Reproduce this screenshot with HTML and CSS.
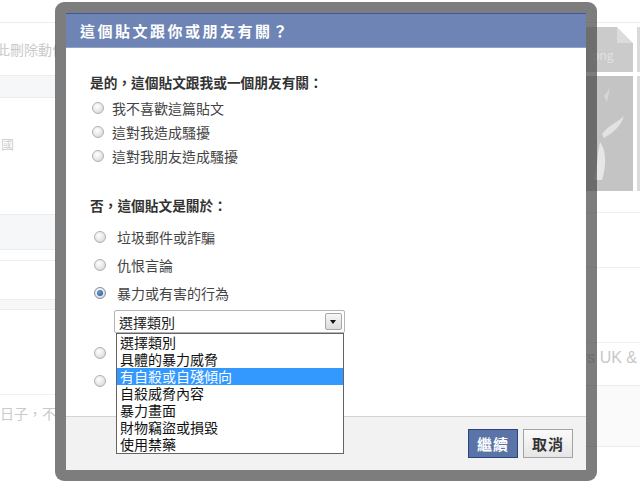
FILE: index.html
```html
<!DOCTYPE html>
<html lang="zh-Hant">
<head>
  <meta charset="UTF-8">
  <title>檢舉貼文</title>
  <link rel="stylesheet" href="styles.css">
</head>
<body>
<!-- 背景頁面（被遮罩淡化） -->
<div class="page">
  <div class="side-left">
    <div class="bg-top"></div>
    <div class="bg-text">此刪除動作</div>
    <div class="bg-band"></div>
    <div class="bg-block"><span class="bg-char">團國</span></div>
    <div class="bg-band tall"></div>
    <div class="bg-line"></div>
    <div class="bg-gap"></div>
    <div class="bg-band thin"></div>
    <div class="bg-fill"></div>
    <div class="bg-text low">日子，不</div>
  </div>
  <div class="middle"></div>
  <div class="side-right">
    <div class="bg-top"></div>
    <div class="tiles">
      <div class="tile small"><span>png</span><i class="fold"></i></div>
      <div class="tile edge"></div>
    </div>
    <div class="tiles">
      <div class="tile big">
        <svg width="49" height="115" viewBox="0 0 49 115">
          <path d="M18 58 C26 48 34 46 40 40 C37 50 30 56 20 62 Z" fill="#e2e2e2"/>
          <path d="M16 66 C22 74 23 88 18 104 L10 104 C14 90 13 78 16 66 Z" fill="#e6e6e6"/>
          <path d="M20 20 L26 12 L23 26 Z" fill="#d6d6d6"/>
        </svg>
      </div>
      <div class="tile edge"></div>
    </div>
    <div class="bg-line r1"></div>
    <div class="bg-line r2"></div>
    <div class="bg-line r3"></div>
    <div class="bg-en">ers UK &amp;</div>
    <div class="bg-band r4"></div>
  </div>
</div>

<!-- 檢舉對話框 -->
<div class="dialog-frame">
  <div class="dialog">
    <div class="dialog-title">這個貼文跟你或朋友有關？</div>
    <div class="dialog-body">
      <div class="section-title">是的，這個貼文跟我或一個朋友有關：</div>
      <div class="options">
        <label class="option"><span class="radio"></span>我不喜歡這篇貼文</label>
        <label class="option"><span class="radio"></span>這對我造成騷擾</label>
        <label class="option"><span class="radio"></span>這對我朋友造成騷擾</label>
      </div>

      <div class="section-title second">否，這個貼文是關於：</div>
      <div class="options wide">
        <label class="option"><span class="radio"></span>垃圾郵件或詐騙</label>
        <label class="option"><span class="radio"></span>仇恨言論</label>
        <label class="option"><span class="radio checked"></span>暴力或有害的行為</label>
      </div>

      <div class="select">
        <span class="select-text">選擇類別</span>
        <span class="select-arrow"></span>
        <ul class="select-list">
          <li>選擇類別</li>
          <li>具體的暴力威脅</li>
          <li class="active">有自殺或自殘傾向</li>
          <li>自殺威脅內容</li>
          <li>暴力畫面</li>
          <li>財物竊盜或損毀</li>
          <li>使用禁藥</li>
        </ul>
      </div>

      <!-- 這兩個選項的文字被展開的下拉選單蓋住 -->
      <div class="options wide after-select">
        <label class="option" aria-label="裸露或色情"><span class="radio"></span></label>
        <label class="option" aria-label="侵犯我的智慧財產權"><span class="radio"></span></label>
      </div>
    </div>
    <div class="dialog-footer">
      <button class="btn btn-primary">繼續</button>
      <button class="btn">取消</button>
    </div>
  </div>
</div>
</body>
</html>
```

FILE: styles.css
```css
html, body {
    margin: 0;
    padding: 0;
}

body {
    width: 640px;
    height: 489px;
    overflow: hidden;
    position: relative;
    background-color: #fff;
    font-family: "Noto Sans CJK TC", "Liberation Sans", sans-serif;
    color: #333;
}

/* ---------- 背景頁面 ---------- */
.page {
    display: flex;
    height: 489px;
}

.side-left {
    width: 56px;
    overflow: hidden;
    display: flex;
    flex-direction: column;
}

.middle {
    flex: 1;
}

.side-right {
    width: 56px;
    overflow: hidden;
    display: flex;
    flex-direction: column;
}

.bg-top {
    height: 22px;
    border-bottom: 1px solid #ececec;
    flex-shrink: 0;
}

.bg-text {
    height: 52px;
    line-height: 52px;
    font-size: 14px;
    color: #cacaca;
    white-space: nowrap;
    margin-left: -4px;
    flex-shrink: 0;
}

.bg-text.low {
    height: 36px;
    line-height: 36px;
    margin-left: 0;
}

.bg-band {
    height: 21px;
    background-color: #f6f7f9;
    border-top: 1px solid #ececec;
    border-bottom: 1px solid #ececec;
    flex-shrink: 0;
}

.bg-band.tall {
    height: 34px;
}

.bg-band.thin {
    height: 9px;
}

.bg-block {
    height: 116px;
    flex-shrink: 0;
}

.bg-char {
    display: block;
    margin-top: 36px;
    margin-left: -12px;
    font-size: 13px;
    color: #d0d0d0;
}

.bg-line {
    height: 10px;
    border-bottom: 1px solid #eeeeee;
    flex-shrink: 0;
}

.bg-gap {
    height: 38px;
    flex-shrink: 0;
}

.bg-fill {
    height: 84px;
    border-bottom: 1px solid #f0f0f0;
    flex-shrink: 0;
}

.tiles {
    display: flex;
    gap: 4px;
    margin-top: 4px;
    flex-shrink: 0;
}

.tiles:first-of-type {
    margin-top: 0;
}

.tile {
    width: 49px;
    background-color: #cbcbcb;
    flex-shrink: 0;
    position: relative;
    overflow: hidden;
}

.tile.small {
    height: 45px;
    font-size: 12px;
    color: #e2e2e2;
}

.tile.small span {
    display: block;
    margin-top: 19px;
    margin-left: 8px;
}

.fold {
    position: absolute;
    top: 0;
    right: 0;
    border-style: solid;
    border-width: 0 16px 16px 0;
    border-color: #fff #fff #dcdcdc #dcdcdc;
}

.tile.big {
    height: 115px;
    background-color: #c4c4c4;
}

.tile.edge {
    width: 10px;
    background-color: #dadada;
}

.bg-line.r1 {
    height: 21px;
}

.bg-line.r2 {
    height: 54px;
}

.bg-line.r3 {
    height: 74px;
}

.bg-en {
    font-family: "Liberation Sans", sans-serif;
    font-size: 16px;
    color: #c8c8c8;
    white-space: nowrap;
    margin-left: -11px;
    margin-top: 6px;
    flex-shrink: 0;
}

.bg-band.r4 {
    margin-top: 18px;
    height: 60px;
    background-color: #fafafa;
}

/* ---------- 對話框 ---------- */
.dialog-frame {
    position: absolute;
    left: 55px;
    top: 2px;
    width: 520px;
    height: 457px;
    padding: 11px;
    border-radius: 9px;
    background-color: rgba(70, 70, 70, 0.7);
}

.dialog {
    height: 100%;
    background-color: #fff;
    display: flex;
    flex-direction: column;
}

.dialog-title {
    height: 35px;
    line-height: 33px;
    box-sizing: border-box;
    background-color: #6d84b4;
    border-top: 1px solid #3b5998;
    border-bottom: 1px solid #8fa2c8;
    color: #fff;
    font-size: 15px;
    font-weight: bold;
    letter-spacing: 2.5px;
    padding-left: 14px;
}

.dialog-body {
    flex: 1;
    padding: 0 24px;
}

.section-title {
    margin-top: 24px;
    line-height: 20px;
    font-size: 13.7px;
    font-weight: bold;
    color: #333;
}

.section-title.second {
    margin-top: 27px;
}

.options {
    margin-top: 4px;
    display: flex;
    flex-direction: column;
}

.option {
    height: 24px;
    display: flex;
    align-items: center;
    gap: 8px;
    padding-left: 2px;
    font-size: 14px;
    color: #444;
}

.options.wide {
    margin-top: 8px;
}

.options.wide .option {
    height: 28px;
    padding-left: 4px;
    gap: 11px;
}

.options.after-select {
    margin-top: 6px;
}

.radio {
    width: 10px;
    height: 10px;
    border-radius: 50%;
    border: 1px solid #b0b0b0;
    background: radial-gradient(circle at 40% 35%, #ffffff 0%, #e6e6e6 55%, #cfcfcf 100%);
    flex-shrink: 0;
    position: relative;
}

.radio.checked {
    border-color: #7c8fa8;
}

.radio.checked::after {
    content: "";
    position: absolute;
    left: 2px;
    top: 2px;
    width: 6px;
    height: 6px;
    border-radius: 50%;
    background: radial-gradient(circle at 40% 35%, #6f9bd3 0%, #1f4f8f 100%);
}

/* 下拉選單 */
.select {
    position: relative;
    margin-top: 3px;
    margin-left: 24px;
    width: 231px;
    height: 23px;
    box-sizing: border-box;
    border: 1px solid #b5b5b5;
    border-radius: 2px;
    display: flex;
    align-items: center;
}

.select-text {
    flex: 1;
    padding-left: 4px;
    font-size: 14px;
    color: #222;
}

.select-arrow {
    width: 17px;
    height: 17px;
    margin-right: 2px;
    box-sizing: border-box;
    border: 1px solid #a7a7a7;
    border-radius: 2px;
    background: linear-gradient(#f7f7f7, #dcdcdc);
    position: relative;
}

.select-arrow::after {
    content: "";
    position: absolute;
    left: 4px;
    top: 6px;
    border-style: solid;
    border-width: 4px 3.5px 0 3.5px;
    border-color: #111 transparent transparent transparent;
}

.select-list {
    position: absolute;
    top: 22px;
    left: 1px;
    width: 228px;
    margin: 0;
    padding: 0;
    list-style: none;
    background-color: #fff;
    border: 1px solid #646464;
    box-sizing: border-box;
}

.select-list li {
    height: 17px;
    line-height: 17px;
    padding-left: 3px;
    font-size: 14px;
    color: #111;
    white-space: nowrap;
}

.select-list li.active {
    background-color: #3399ff;
    color: #fff;
}

/* 底部按鈕 */
.dialog-footer {
    height: 54px;
    box-sizing: border-box;
    border-top: 1px solid #d4d4d4;
    background-color: #f2f2f2;
    display: flex;
    justify-content: flex-end;
    align-items: center;
    gap: 5px;
    padding-right: 13px;
}

.btn {
    height: 29px;
    width: 50px;
    padding: 0;
    font-family: "Noto Sans CJK TC", sans-serif;
    font-size: 15px;
    font-weight: bold;
    color: #333;
    border: 1px solid #a3a3a3;
    background: linear-gradient(#fafafa, #e6e6e6);
    letter-spacing: 1px;
}

.btn-primary {
    color: #fff;
    border-color: #29447e;
    background: #5b74a8;
}
```
